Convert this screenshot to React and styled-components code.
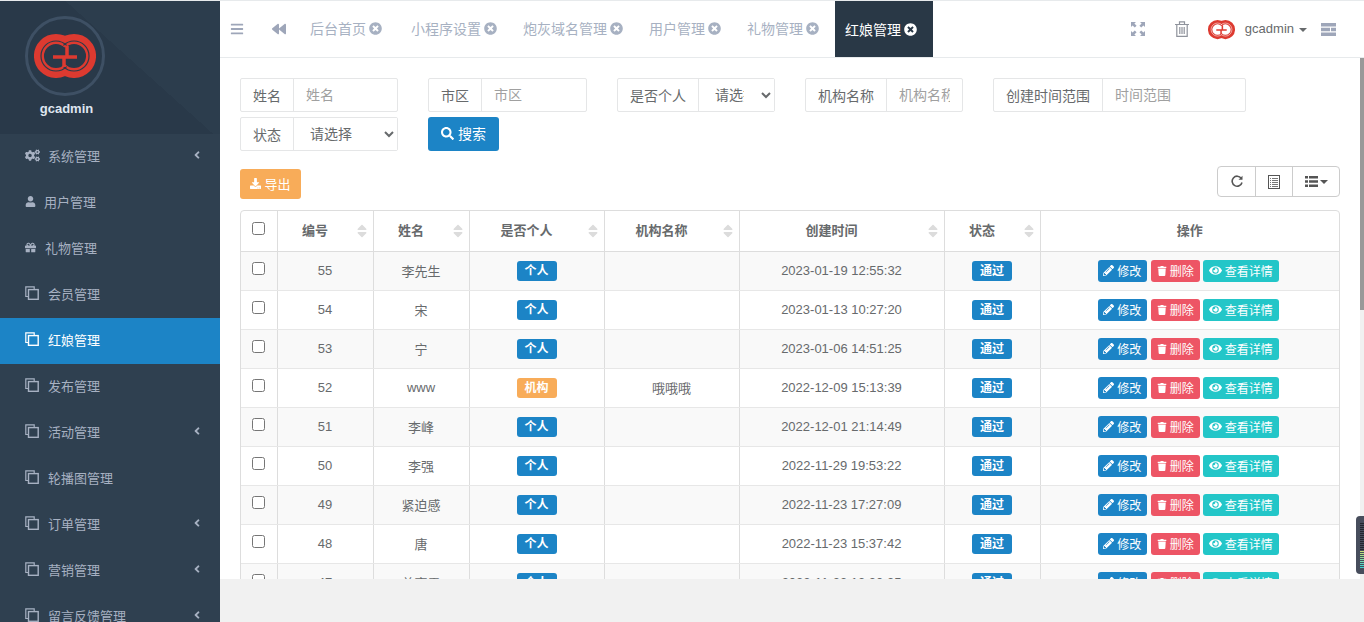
import React from 'react';
import styled, { createGlobalStyle } from 'styled-components';
import {
  FaBars, FaBackward, FaTimesCircle, FaCogs, FaUser, FaGift, FaAngleLeft, FaSearch,
  FaDownload, FaPencilAlt, FaTrash, FaEye, FaSort,
} from 'react-icons/fa';

const GlobalStyle = createGlobalStyle`
  html, body { margin: 0; padding: 0; height: 100%; overflow: hidden; background: #f1f1f1; }
  body { font-family: "Liberation Sans", "Noto Sans CJK SC", sans-serif; font-size: 13px; color: #676a6c; }
  * { box-sizing: border-box; }
`;

const Shell = styled.div`
  display: flex;
  width: 1364px;
  height: 622px;
  overflow: hidden;
`;

const Sidebar = styled.aside`
  width: 220px;
  flex: none;
  background: #2f4050;
  overflow: hidden;
`;

const ProfileBg = styled.div`
  height: 134px;
  border-top: 1px solid #e7eaec;
  background: linear-gradient(42deg, #293949 58%, #2c3d4d 58%);
`;

const Profile = styled.div`
  display: flex;
  flex-direction: column;
  align-items: center;
  width: 130px;
  padding-top: 15px;
`;

const Avatar = styled.div`
  width: 80px;
  height: 80px;
  border-radius: 50%;
  border: 3px solid #3e5064;
  display: flex;
  align-items: center;
  justify-content: center;
`;

const ProfileName = styled.div`
  margin: 5px 0 0 3px;
  font-weight: 700;
  font-size: 13px;
  color: #dfe6f0;
  line-height: 16px;
`;

const MenuItem = styled.a`
  display: flex;
  align-items: center;
  height: 46px;
  padding: 0 17px 4px 25px;
  font-size: 13px;
  color: ${(props) => (props.active ? '#fff' : '#a7b1c2')};
  background: ${(props) => (props.active ? '#1c84c6' : 'transparent')};
  svg { flex: none; }
`;

const MenuLabel = styled.span`
  flex: 1;
  margin-left: ${(props) => props.gap}px;
`;

const Main = styled.div`
  position: relative;
  flex: 1;
  min-width: 0;
  display: flex;
  flex-direction: column;
`;

const TopBar = styled.header`
  height: 58px;
  flex: none;
  display: flex;
  align-items: stretch;
  padding-right: 28px;
  background: #fff;
  border-top: 1px solid #e7eaec;
  border-bottom: 1px solid #e7eaec;
  color: #9ea6b9;
`;

const NavIcon = styled.div`
  display: flex;
  align-items: center;
  justify-content: center;
  flex: none;
  width: ${(props) => props.w}px;
  margin-left: ${(props) => props.ml || 0}px;
`;

const Tabs = styled.div`
  display: flex;
  align-items: stretch;
  flex: 1;
  margin-left: 11px;
`;

const Tab = styled.div`
  display: flex;
  align-items: center;
  gap: 3px;
  padding: 0 13px 2px;
  font-size: 14px;
  color: #a7b1c2;
  &:first-child { margin-right: 3px; }
`;

const ActiveTab = styled(Tab)`
  margin-left: 3px;
  padding: 0 16px 0 10px;
  color: #fff;
  background: #293846;
`;

const UserName = styled.span`
  font-size: 13px;
  margin-left: 10px;
  padding-bottom: 3px;
`;

const Caret = styled.span`
  display: inline-block;
  width: 0;
  height: 0;
  margin-left: ${(props) => props.ml ?? 5}px;
  border-top: 4px solid currentColor;
  border-left: 4px solid transparent;
  border-right: 4px solid transparent;
`;

const UserBox = styled.div`
  display: flex;
  align-items: center;
  margin-left: 19px;
  padding-top: 2px;
  color: #676a6c;
`;

const Content = styled.main`
  flex: none;
  height: 521px;
  background: #fff;
  overflow: hidden;
  padding: 20px;
`;

const ScrollTrack = styled.div`
  position: absolute;
  right: 0;
  top: 58px;
  width: 4px;
  height: 521px;
  background: #f1f1f1;
`;

const ScrollThumb = styled.div`
  height: 252px;
  background: #999;
`;

const FilterForm = styled.form`
  display: flex;
  flex-wrap: wrap;
  gap: 5px 30px;
  width: 1100px;
`;

const Field = styled.div`
  display: flex;
  width: ${(props) => props.w}px;
  height: 34px;
  border: 1px solid #e5e6e7;
  border-radius: 2px;
  font-size: 14px;
`;

const FieldLabel = styled.span`
  flex: none;
  width: ${(props) => props.w}px;
  padding-bottom: 1px;
  display: flex;
  align-items: center;
  justify-content: center;
  border-right: 1px solid #e5e6e7;
  white-space: nowrap;
`;

const FieldInput = styled.input`
  flex: 1;
  min-width: 0;
  border: 0;
  outline: 0;
  padding: 0 12px;
  font: inherit;
  color: #676a6c;
  background: transparent;
  &::placeholder { color: #a0a0a0; opacity: 1; }
`;

const FieldSelect = styled.select`
  flex: 1;
  min-width: 0;
  border: 0;
  outline: 0;
  padding: 0 14px 0 12px;
  font: inherit;
  color: #676a6c;
  background: #fff;
`;

const SearchButton = styled.button`
  width: 71px;
  height: 34px;
  padding: 0 0 2px;
  border: 0;
  border-radius: 3px;
  background: #1c84c6;
  color: #fff;
  font: inherit;
  font-size: 14px;
  display: flex;
  align-items: center;
  justify-content: center;
  gap: 4px;
`;

const Toolbar = styled.div`
  display: flex;
  justify-content: space-between;
  width: 1100px;
  margin-top: 15px;
  height: 44px;
`;

const ExportButton = styled.button`
  width: 61px;
  height: 30px;
  margin-top: 3px;
  padding: 0 0 2px;
  border: 0;
  border-radius: 3px;
  background: #f8ac59;
  color: #fff;
  font: inherit;
  font-size: 13px;
  display: flex;
  align-items: center;
  justify-content: center;
  gap: 3px;
`;

const ToolGroup = styled.div`
  display: flex;
  height: 31px;
  border: 1px solid #ccc;
  border-radius: 4px;
  color: #555;
`;

const ToolButton = styled.div`
  width: ${(props) => props.w}px;
  display: flex;
  align-items: center;
  justify-content: center;
  & + & { border-left: 1px solid #ccc; }
`;

const TableWrap = styled.div`
  width: 1100px;
  border: 1px solid #ddd;
  border-radius: 4px;
`;

const Table = styled.table`
  width: 100%;
  table-layout: fixed;
  border-collapse: collapse;
  font-size: 13px;
  text-align: center;
`;

const HeadCell = styled.th`
  position: relative;
  height: 40px;
  padding: 0 ${(props) => (props.sortable ? '20px' : 0)} 2px 0;
  font-weight: 700;
  border-left: 1px solid #ddd;
  border-bottom: 1px solid #ddd;
  &:first-child { border-left: 0; }
`;

const SortMark = styled.span`
  position: absolute;
  right: 3px;
  top: 12px;
  color: #dcdcdc;
  line-height: 0;
`;

const Row = styled.tr`
  background: ${(props) => (props.odd ? '#f9f9f9' : '#fff')};
`;

const Cell = styled.td`
  height: 39px;
  padding: 0;
  border-left: 1px solid #ddd;
  border-bottom: 1px solid #e7e7e7;
  &:first-child { border-left: 0; }
`;

const Check = styled.input`
  display: block;
  width: 13px;
  height: 13px;
  margin: -5px auto 0;
`;

const HeadCheck = styled(Check)`
  margin-top: -3px;
`;

const Badge = styled.span`
  display: inline-block;
  width: 40px;
  height: 20px;
  line-height: 20px;
  border-radius: 3px;
  font-size: 12px;
  font-weight: 700;
  color: #fff;
  background: ${(props) => props.color};
`;

const Actions = styled.div`
  display: flex;
  justify-content: center;
  gap: 4px;
  padding-right: 3px;
`;

const ActionButton = styled.span`
  display: inline-flex;
  align-items: center;
  justify-content: center;
  gap: 3px;
  height: 22px;
  width: ${(props) => props.w}px;
  margin-left: ${(props) => props.ml || 0}px;
  border-radius: 3px;
  font-size: 12px;
  color: #fff;
  background: ${(props) => props.color};
`;

const Floater = styled.div`
  position: fixed;
  left: 1356px;
  top: 516px;
  width: 12px;
  height: 58px;
  border-radius: 4px;
  background: #474d5c;
  padding: 7px 0 0 4px;
`;

const FloaterBar = styled.div`
  height: 1px;
  margin-bottom: 1px;
  background: ${(props) => props.color};
`;

const Footer = styled.div`
  flex: 1;
  background: #f1f1f1;
`;

// 两个互扣的 G
const LogoMark = ({ width = 62, gapColor = '#2a3b4a' }) => (
  <svg width={width} height={width * 0.71} viewBox="0 0 62 44" fill="none">
    <path d="M34 10A17 17 0 1 0 34 34" stroke="#dd3a30" strokeWidth="10" />
    <path d="M28 34A17 17 0 1 0 28 10" stroke="#dd3a30" strokeWidth="10" />
    <path d="M32.6 11.4A15 15 0 1 0 32.6 32.6" stroke={gapColor} strokeWidth="1.2" />
    <path d="M29.4 32.6A15 15 0 1 0 29.4 11.4" stroke={gapColor} strokeWidth="1.2" />
    <path d="M19 23H30V33M43 23H33V12" stroke="#dd3a30" strokeWidth="3.5" />
  </svg>
);

const CopyIcon = () => (
  <svg width="14" height="14" viewBox="0 0 14 14" fill="none" stroke="currentColor" strokeWidth="1.2">
    <path d="M3.5 10.5H.8V.8h8.4v3" />
    <rect x="3.5" y="3.6" width="9.7" height="9.7" strokeWidth="1.4" />
  </svg>
);

const ExpandIcon = () => (
  <svg width="14" height="14" viewBox="0 0 14 14" fill="#9ea6b9">
    <path d="M0 0h5L3.4 1.6 5.6 3.8 3.8 5.6 1.6 3.4 0 5zM14 0v5l-1.6-1.6-2.2 2.2-1.8-1.8 2.2-2.2L9 0zM0 14V9l1.6 1.6 2.2-2.2 1.8 1.8-2.2 2.2L5 14zM14 14H9l1.6-1.6-2.2-2.2 1.8-1.8 2.2 2.2L14 9z" />
  </svg>
);

const TrashIcon = () => (
  <svg width="14" height="16" viewBox="0 0 14 16" fill="none" stroke="#8f939c" strokeWidth="1.2">
    <path d="M0 3.5h14M1.8 3.5v11.9h10.4V3.5M4.5 3V.8h5V3M4.8 6v7M7 6v7M9.2 6v7" />
  </svg>
);

const ServerIcon = () => (
  <svg width="15" height="13" viewBox="0 0 15 13" fill="#9ea6b9">
    <path d="M0 0h15v3.4H0zM0 4.8h9v3.4H0zM10 4.8h5v3.4h-5zM0 9.6h15V13H0z" />
  </svg>
);

const RefreshIcon = () => (
  <svg width="12" height="13" viewBox="0 0 12 13" fill="none" stroke="#555" strokeWidth="1.6">
    <path d="M10.2 3.2A5 5 0 1 0 11 7.5" />
    <path d="M11.5 0.8v4h-4z" fill="#555" stroke="none" />
  </svg>
);

const ListAltIcon = () => (
  <svg width="12" height="14" viewBox="0 0 12 14" fill="none" stroke="#555" shapeRendering="crispEdges">
    <rect x="0.5" y="0.5" width="11" height="13" />
    <path d="M2 3.5h1M4 3.5h6M2 5.5h1M4 5.5h6M2 7.5h1M4 7.5h6M2 9.5h1M4 9.5h6M2 11.5h1M4 11.5h6" strokeOpacity="0.8" />
  </svg>
);

const ThListIcon = () => (
  <svg width="13" height="11" viewBox="0 0 13 11" fill="#555">
    <path d="M0 0h3v2.6H0zM4 0h9v2.6H4zM0 4.2h3v2.6H0zM4 4.2h9v2.6H4zM0 8.4h3V11H0zM4 8.4h9V11H4z" />
  </svg>
);

const menus = [
  { label: '系统管理', icon: <FaCogs size={15} />, gap: 8, arrow: true },
  { label: '用户管理', icon: <FaUser size={11} />, gap: 8 },
  { label: '礼物管理', icon: <FaGift size={11} />, gap: 9 },
  { label: '会员管理', icon: <CopyIcon />, gap: 9 },
  { label: '红娘管理', icon: <CopyIcon />, gap: 9, active: true },
  { label: '发布管理', icon: <CopyIcon />, gap: 9 },
  { label: '活动管理', icon: <CopyIcon />, gap: 9, arrow: true },
  { label: '轮播图管理', icon: <CopyIcon />, gap: 9 },
  { label: '订单管理', icon: <CopyIcon />, gap: 9, arrow: true },
  { label: '营销管理', icon: <CopyIcon />, gap: 9, arrow: true },
  { label: '留言反馈管理', icon: <CopyIcon />, gap: 9, arrow: true },
];

const tabs = ['后台首页', '小程序设置', '炮灰域名管理', '用户管理', '礼物管理'];

const columns = [
  { title: '编号', width: 96 },
  { title: '姓名', width: 96 },
  { title: '是否个人', width: 135 },
  { title: '机构名称', width: 135 },
  { title: '创建时间', width: 205 },
  { title: '状态', width: 96 },
];

const rows = [
  { id: 55, name: '李先生', time: '2023-01-19 12:55:32' },
  { id: 54, name: '宋', time: '2023-01-13 10:27:20' },
  { id: 53, name: '宁', time: '2023-01-06 14:51:25' },
  { id: 52, name: 'www', org: '哦哦哦', time: '2022-12-09 15:13:39' },
  { id: 51, name: '李峰', time: '2022-12-01 21:14:49' },
  { id: 50, name: '李强', time: '2022-11-29 19:53:22' },
  { id: 49, name: '紧迫感', time: '2022-11-23 17:27:09' },
  { id: 48, name: '唐', time: '2022-11-23 15:37:42' },
  { id: 47, name: '姜育霖', time: '2022-11-23 13:30:35' },
];

const floaterBars = [
  ...Array(14).fill('#23262e'),
  '#c9e07a', '#b8e080', '#a7dd8a', '#96dc96', '#85daa4', '#74d8b2', '#63d6c0', '#52d4c8', '#45d2cf',
];

export default function App() {
  return (
    <Shell>
      <GlobalStyle />
      <Sidebar>
        <ProfileBg>
          <Profile>
            <Avatar>
              <LogoMark />
            </Avatar>
            <ProfileName>gcadmin</ProfileName>
          </Profile>
        </ProfileBg>
        {menus.map((m) => (
          <MenuItem key={m.label} active={m.active}>
            {m.icon}
            <MenuLabel gap={m.gap}>{m.label}</MenuLabel>
            {m.arrow && <FaAngleLeft size={12} />}
          </MenuItem>
        ))}
      </Sidebar>
      <Main>
        <TopBar>
          <NavIcon w={33}><FaBars size={14} /></NavIcon>
          <NavIcon w={14} ml={19}><FaBackward size={14} /></NavIcon>
          <Tabs>
            {tabs.map((t) => (
              <Tab key={t}>{t}<FaTimesCircle size={13} /></Tab>
            ))}
            <ActiveTab>红娘管理<FaTimesCircle size={13} /></ActiveTab>
          </Tabs>
          <NavIcon w={14}><ExpandIcon /></NavIcon>
          <NavIcon w={14} ml={30}><TrashIcon /></NavIcon>
          <UserBox>
            <LogoMark width={27} gapColor="#fff" />
            <UserName>gcadmin</UserName>
            <Caret />
          </UserBox>
          <NavIcon w={15} ml={14}><ServerIcon /></NavIcon>
        </TopBar>
        <Content>
          <FilterForm>
            <Field w={158}><FieldLabel w={53}>姓名</FieldLabel><FieldInput placeholder="姓名" /></Field>
            <Field w={159}><FieldLabel w={53}>市区</FieldLabel><FieldInput placeholder="市区" /></Field>
            <Field w={158}>
              <FieldLabel w={81}>是否个人</FieldLabel>
              <FieldSelect><option>请选择</option></FieldSelect>
            </Field>
            <Field w={158}><FieldLabel w={81}>机构名称</FieldLabel><FieldInput placeholder="机构名称" /></Field>
            <Field w={253}><FieldLabel w={109}>创建时间范围</FieldLabel><FieldInput placeholder="时间范围" /></Field>
            <Field w={158}>
              <FieldLabel w={53}>状态</FieldLabel>
              <FieldSelect><option>请选择</option></FieldSelect>
            </Field>
            <SearchButton type="button"><FaSearch size={13} />搜索</SearchButton>
          </FilterForm>
          <Toolbar>
            <ExportButton type="button"><FaDownload size={11} />导出</ExportButton>
            <ToolGroup>
              <ToolButton w={37}><RefreshIcon /></ToolButton>
              <ToolButton w={37}><ListAltIcon /></ToolButton>
              <ToolButton w={47}><ThListIcon /><Caret ml={2} /></ToolButton>
            </ToolGroup>
          </Toolbar>
          <TableWrap>
            <Table>
              <colgroup>
                <col style={{ width: 36 }} />
                {columns.map((c) => <col key={c.title} style={{ width: c.width }} />)}
                <col />
              </colgroup>
              <thead>
                <tr>
                  <HeadCell><HeadCheck type="checkbox" /></HeadCell>
                  {columns.map((c) => (
                    <HeadCell key={c.title} sortable>
                      {c.title}
                      <SortMark><FaSort size={16} /></SortMark>
                    </HeadCell>
                  ))}
                  <HeadCell>操作</HeadCell>
                </tr>
              </thead>
              <tbody>
                {rows.map((r, i) => (
                  <Row key={r.id} odd={i % 2 === 0}>
                    <Cell><Check type="checkbox" /></Cell>
                    <Cell>{r.id}</Cell>
                    <Cell>{r.name}</Cell>
                    <Cell>
                      {r.org
                        ? <Badge color="#f8ac59">机构</Badge>
                        : <Badge color="#1c84c6">个人</Badge>}
                    </Cell>
                    <Cell>{r.org}</Cell>
                    <Cell>{r.time}</Cell>
                    <Cell><Badge color="#1c84c6">通过</Badge></Cell>
                    <Cell>
                      <Actions>
                        <ActionButton w={49} color="#1c84c6"><FaPencilAlt size={11} />修改</ActionButton>
                        <ActionButton w={49} color="#ed5565"><FaTrash size={10} />删除</ActionButton>
                        <ActionButton w={76} ml={-1} color="#23c6c8"><FaEye size={13} />查看详情</ActionButton>
                      </Actions>
                    </Cell>
                  </Row>
                ))}
              </tbody>
            </Table>
          </TableWrap>
        </Content>
        <Footer />
        <ScrollTrack><ScrollThumb /></ScrollTrack>
      </Main>
      <Floater>
        {floaterBars.map((c, i) => (
          <FloaterBar key={i} color={c} />
        ))}
      </Floater>
    </Shell>
  );
}
